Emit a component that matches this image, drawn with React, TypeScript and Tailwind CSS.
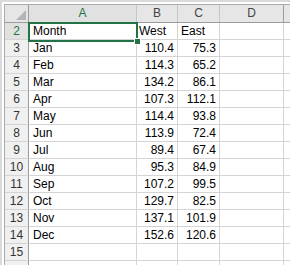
const rows: [string, string, string][] = [
  ["Jan", "110.4", "75.3"],
  ["Feb", "114.3", "65.2"],
  ["Mar", "134.2", "86.1"],
  ["Apr", "107.3", "112.1"],
  ["May", "114.4", "93.8"],
  ["Jun", "113.9", "72.4"],
  ["Jul", "89.4", "67.4"],
  ["Aug", "95.3", "84.9"],
  ["Sep", "107.2", "99.5"],
  ["Oct", "129.7", "82.5"],
  ["Nov", "137.1", "101.9"],
  ["Dec", "152.6", "120.6"],
];

const cell = "h-[17px] border-b border-r border-[#d4d4d4] leading-[17px] overflow-hidden whitespace-nowrap shrink-0";

function RowHead({ n, active }: { n?: number; active?: boolean }) {
  return (
    <div
      className={`w-[24px] h-[17px] shrink-0 border-b border-r border-b-[#d4d4d4] border-r-[#9b9b9b] text-center leading-[17px] ${
        active ? "bg-[#e1e1e1] text-[#217346]" : "bg-[#f0f0f0] text-[#333]"
      }`}
    >
      {n}
    </div>
  );
}

export default function App() {
  return (
    <div
      className="w-[290px] h-[265px] overflow-hidden bg-white relative text-[12px] text-black"
      style={{ fontFamily: '"Liberation Sans", Arial, sans-serif' }}
    >
      <div className="w-full h-full border-t-2 border-l-2 border-[#dadada] pt-[2px] pl-[2px]">
        <div className="w-[400px] h-full border-t border-l border-[#ababab]">
          {/* column headers */}
          <div className="flex h-[18px] bg-[#e6e6e6] border-b border-[#9b9b9b] text-[#444]">
            <div className="w-[24px] shrink-0 border-r border-[#9b9b9b] relative">
              <svg className="absolute right-[2px] bottom-[2px]" width="10" height="10" viewBox="0 0 10 10">
                <polygon points="10,0 10,10 0,10" fill="#b4b4b4" />
              </svg>
            </div>
            <div className="w-[108px] shrink-0 border-r border-[#c6c6c6] text-center leading-[17px] bg-[#e1e1e1] text-[#217346]">A</div>
            <div className="w-[41px] shrink-0 border-r border-[#c6c6c6] text-center leading-[17px]">B</div>
            <div className="w-[42px] shrink-0 border-r border-[#c6c6c6] text-center leading-[17px]">C</div>
            <div className="w-[64px] shrink-0 border-r border-[#9b9b9b] text-center leading-[17px]">D</div>
            <div className="flex-1" />
          </div>

          {/* row 2: headings */}
          <div className="flex">
            <RowHead n={2} active />
            <div className={`${cell} w-[108px] pl-[4px]`}>Month</div>
            <div className={`${cell} w-[41px] pl-[2px]`}>West</div>
            <div className={`${cell} w-[42px] pl-[3px]`}>East</div>
            <div className={`${cell} w-[64px]`} />
            <div className={`${cell} w-[80px]`} />
          </div>

          {rows.map(([m, w, e], i) => (
            <div key={m} className="flex">
              <RowHead n={i + 3} />
              <div className={`${cell} w-[108px] pl-[4px]`}>{m}</div>
              <div className={`${cell} w-[41px] pr-[3px] text-right`}>{w}</div>
              <div className={`${cell} w-[42px] pr-[3px] text-right`}>{e}</div>
              <div className={`${cell} w-[64px]`} />
              <div className={`${cell} w-[80px]`} />
            </div>
          ))}

          {/* row 15 and the top of row 16 */}
          {[15, undefined].map((n, i) => (
            <div key={i} className="flex">
              <RowHead n={n} />
              <div className={`${cell} w-[108px]`} />
              <div className={`${cell} w-[41px]`} />
              <div className={`${cell} w-[42px]`} />
              <div className={`${cell} w-[64px]`} />
              <div className={`${cell} w-[80px]`} />
            </div>
          ))}
        </div>
      </div>

      {/* selection */}
      <div className="absolute left-[28px] top-[22px] w-[110px] h-[20px] border-2 border-[#217346] pointer-events-none">
        <div className="absolute right-[-5px] bottom-[-5px] w-[7px] h-[7px] bg-[#217346] border border-white" />
      </div>
    </div>
  );
}
